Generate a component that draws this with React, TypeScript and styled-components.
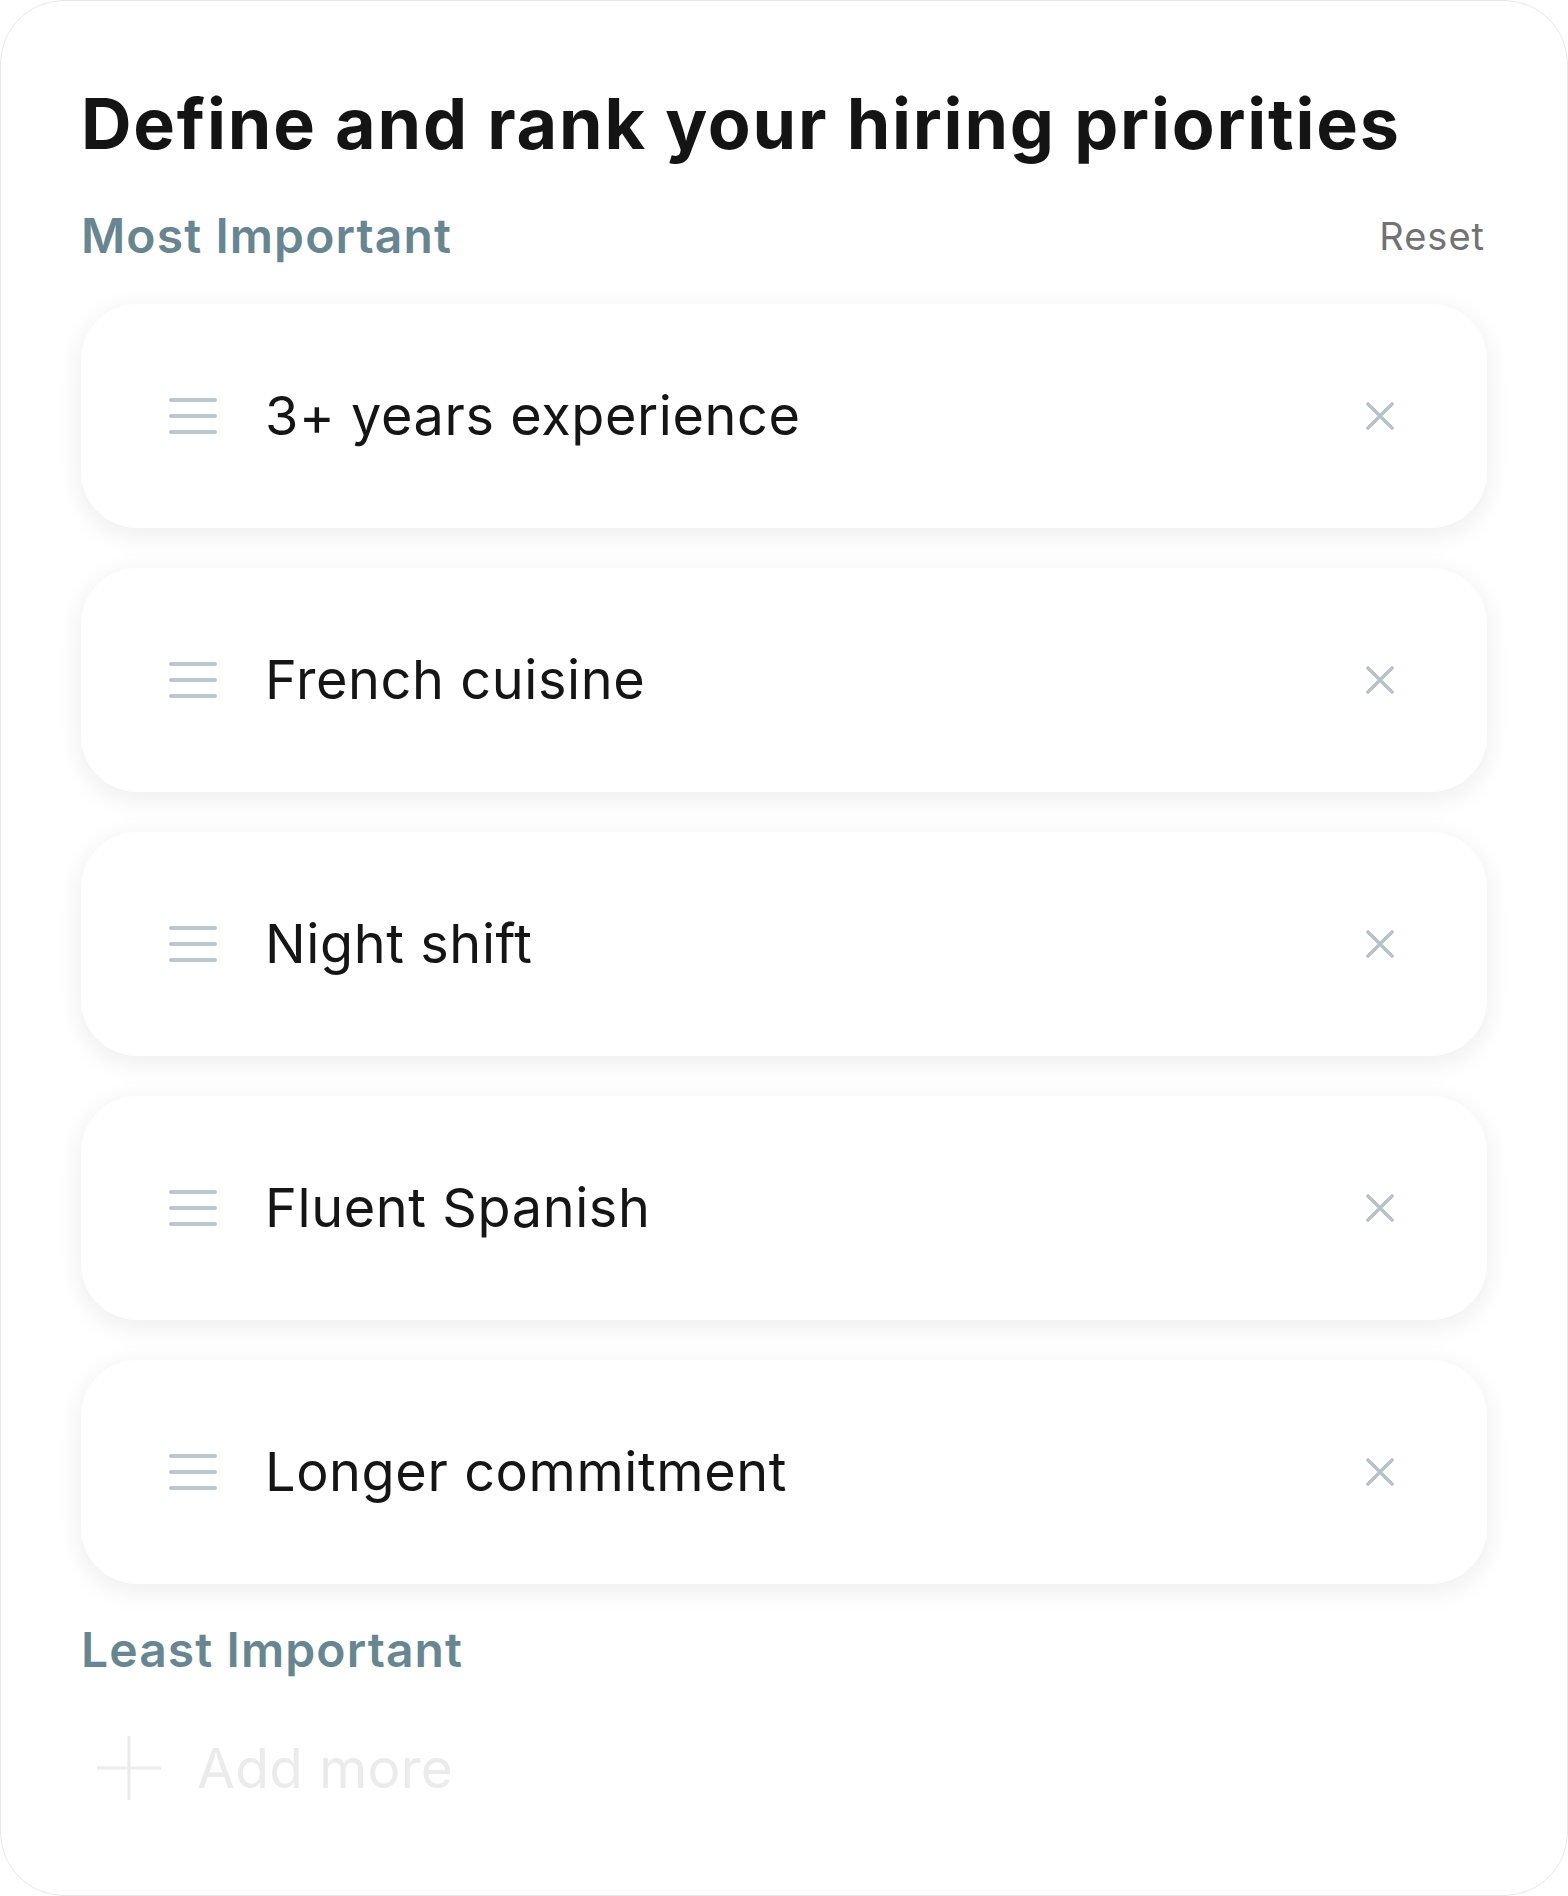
import React from "react";
import styled, { createGlobalStyle } from "styled-components";

const GlobalStyle = createGlobalStyle`
  html, body {
    margin: 0;
    padding: 0;
    background: #ffffff;
  }
  * {
    box-sizing: border-box;
  }
`;

const priorities = [
  "3+ years experience",
  "French cuisine",
  "Night shift",
  "Fluent Spanish",
  "Longer commitment",
];

const Panel = styled.div`
  width: 1568px;
  height: 1896px;
  border: 1px solid #e8e8e8;
  border-radius: 64px;
  background: #ffffff;
  padding: 88px 80px 0 80px;
  font-family: Inter, "Noto Sans", sans-serif;
  display: flex;
  flex-direction: column;
`;

const Title = styled.h1`
  margin: 0 0 53px 0;
  font-size: 70px;
  line-height: 1;
  font-weight: 700;
  color: #141414;
  letter-spacing: 1.8px;
`;

const SectionHeader = styled.div`
  display: flex;
  align-items: center;
  justify-content: space-between;
`;

const SectionLabel = styled.h2<{ $gap: number }>`
  margin: 0 0 ${({ $gap }) => $gap}px 0;
  font-size: 48px;
  line-height: 1;
  font-weight: 600;
  letter-spacing: 1.1px;
  color: #678690;
`;

const ResetButton = styled.button`
  border: none;
  background: none;
  padding: 0;
  margin: 0 2px 44px 0;
  font-family: inherit;
  font-size: 38px;
  line-height: 1;
  letter-spacing: 1px;
  color: #727272;
  cursor: pointer;
`;

const List = styled.div`
  display: flex;
  flex-direction: column;
  gap: 40px;
  margin-bottom: 42px;
`;

const Item = styled.div`
  height: 224px;
  background: #ffffff;
  border-radius: 56px;
  box-shadow: 0 6px 28px rgba(0, 0, 0, 0.08);
  display: flex;
  align-items: center;
  padding: 0 93px 0 88px;
`;

const Handle = styled.div`
  width: 48px;
  display: flex;
  flex-direction: column;
  gap: 12px;
  flex-shrink: 0;
`;

const HandleLine = styled.span`
  display: block;
  height: 4px;
  border-radius: 2px;
  background: #bdc7c9;
`;

const ItemText = styled.span`
  flex: 1;
  margin-left: 48px;
  font-size: 54px;
  line-height: 1;
  letter-spacing: 0.6px;
  color: #151515;
`;

const RemoveButton = styled.button`
  border: none;
  background: none;
  padding: 0;
  width: 28px;
  height: 28px;
  display: flex;
  cursor: pointer;
`;

const AddRow = styled.div`
  display: flex;
  align-items: center;
  gap: 36px;
  margin-top: 20px;
  padding-left: 16px;
`;

const AddText = styled.span`
  font-size: 55px;
  line-height: 1;
  letter-spacing: 0.3px;
  color: #ebebeb;
`;

const CloseIcon = () => (
  <svg width="28" height="28" viewBox="0 0 28 28">
    <path
      d="M2 2 L26 26 M26 2 L2 26"
      stroke="#b8c3c5"
      strokeWidth="3.6"
      strokeLinecap="round"
    />
  </svg>
);

const PlusIcon = () => (
  <svg width="64" height="64" viewBox="0 0 64 64">
    <path
      d="M32 1 V63 M1 32 H63"
      stroke="#ebebeb"
      strokeWidth="3"
      strokeLinecap="round"
    />
  </svg>
);

export default function App() {
  return (
    <>
      <GlobalStyle />
      <Panel>
        <Title>Define and rank your hiring priorities</Title>
        <SectionHeader>
          <SectionLabel $gap={44}>Most Important</SectionLabel>
          <ResetButton>Reset</ResetButton>
        </SectionHeader>
        <List>
          {priorities.map((p) => (
            <Item key={p}>
              <Handle>
                <HandleLine />
                <HandleLine />
                <HandleLine />
              </Handle>
              <ItemText>{p}</ItemText>
              <RemoveButton aria-label="Remove">
                <CloseIcon />
              </RemoveButton>
            </Item>
          ))}
        </List>
        <SectionLabel $gap={42}>Least Important</SectionLabel>
        <AddRow>
          <PlusIcon />
          <AddText>Add more</AddText>
        </AddRow>
      </Panel>
    </>
  );
}
